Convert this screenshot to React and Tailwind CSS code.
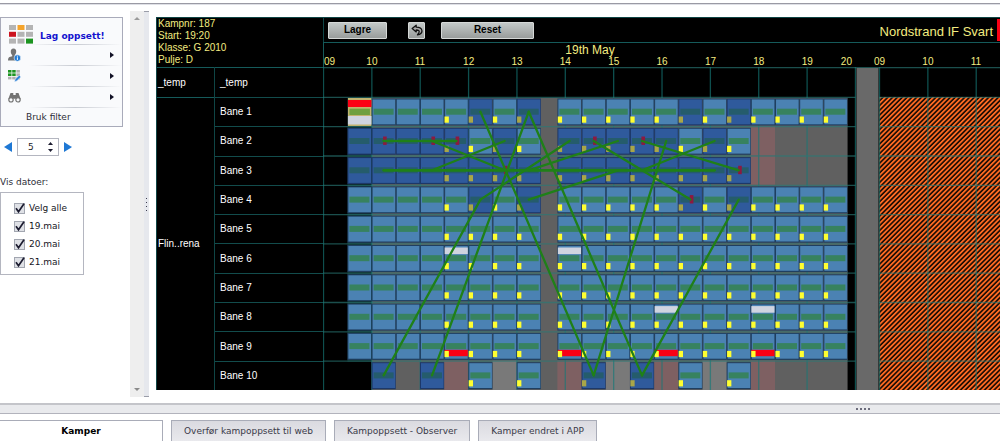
import React from "react";

const HOUR = 48.36;
const SLOT = 24.18;
const MORNING = 48.6;
const AFTERNOON = 234.4;
const TOP = 30;
const ROW = 29.3;
const DAY_END = 532.5;

const am = (i) => MORNING + SLOT * i;
const pm = (j) => AFTERNOON + SLOT * j;
const rowY = (r) => TOP + ROW * (r - 1);
const amC = (i, r) => [am(i) + SLOT / 2, rowY(r) + 14.7];
const pmC = (j, r) => [pm(j) + SLOT / 2, rowY(r) + 14.7];

const range = (a, b) => Array.from({ length: b - a + 1 }, (_, k) => a + k);

const rows = [
  { am: range(0, 6), pm: range(0, 11), darkAm: [4, 6], darkPm: [5, 7] },
  { am: range(-1, 6), pm: range(0, 7), darkAm: [-1, 0, 1, 2, 3, 5], darkPm: [0, 1, 2, 3, 4, 6], pinkPm: [8] },
  { am: range(-1, 6), pm: range(0, 7), darkAm: range(-1, 6), darkPm: range(0, 7), pinkPm: [8] },
  { am: range(-1, 6), pm: range(0, 11), darkAm: [4, 6], darkPm: [5, 7] },
  { am: range(-1, 6), pm: range(0, 11) },
  { am: range(-1, 6), pm: range(0, 11), whiteAm: [3], whitePm: [0] },
  { am: range(-1, 6), pm: range(0, 11) },
  { am: range(-1, 6), pm: range(0, 11), whitePm: [4, 8] },
  { am: range(-1, 6), pm: range(0, 11), redAm: [3], redPm: [0, 4, 8] },
  {
    am: [0, 2, 4, 6], pm: [1, 3, 5, 7], darkAm: [0, 2], darkPm: [1, 3],
    pinkAm: [3], pinkPm: [0, 4, 8], paleAm: [5], palePm: [2, 6],
  },
];

const links = [
  [amC(4, 1), pmC(1, 10)],
  [amC(6, 1), amC(2, 10)],
  [amC(6, 1), pmC(3, 10)],
  [amC(4, 4), amC(0, 10)],
  [amC(2, 2), amC(5, 3)],
  [amC(2, 3), amC(5, 2)],
  [amC(4, 4), pmC(0, 2)],
  [amC(6, 3), pmC(2, 2)],
  [amC(6, 4), pmC(2, 3)],
  [pmC(3, 3), pmC(6, 2)],
  [pmC(1, 2), pmC(5, 4)],
  [pmC(3, 2), pmC(7, 3)],
  [pmC(4, 2), pmC(1, 10)],
  [pmC(7, 4), pmC(3, 10)],
];
const thickLinks = [
  [amC(0, 2), amC(3, 2)],
  [amC(0, 3), pmC(6, 3)],
];
const conflicts = [amC(0, 2), amC(2, 2), amC(3, 2), amC(5, 3), pmC(1, 2), pmC(3, 2), pmC(5, 4), pmC(7, 3)];

function Match({ x, y, dark, flag, white, red }) {
  return (
    <g>
      <rect x={x} y={y + 1.5} width={SLOT} height="27" fill={dark ? "#1d3868" : "#1f3f60"} />
      <rect x={x + 1} y={y + 2.5} width={SLOT - 1.6} height="24.8" fill={dark ? "#2f5a9c" : "#4b82b3"} />
      <rect x={x + 2} y={y + 11.7} width="20" height="6" fill={dark ? "#255c6c" : "#37825f"} />
      {white && <rect x={x + 0.5} y={y + 4} width={SLOT - 1} height="6.6" fill="#d0d4e0" />}
      {red && <rect x={x + 0.5} y={y + 18.4} width={SLOT - 1} height="6.4" fill="#fb0014" />}
      {flag && <rect x={x + 0.4} y={y + 19.5} width="4.3" height="6.2" fill={dark ? "#a9a648" : "#ffff30"} />}
    </g>
  );
}

function HalfDay({ row, r, pos, part, flagFrom }) {
  const has = (kind, i) => (row[kind + part] || []).includes(i);
  return (
    <>
      {row[part.toLowerCase()].map((i) => (
        <Match
          key={i} x={pos(i)} y={rowY(r)} dark={has("dark", i)} flag={i >= flagFrom}
          white={has("white", i)} red={has("red", i)}
        />
      ))}
    </>
  );
}

function Schedule() {
  const bottom = TOP + ROW * 10;
  return (
    <svg className="block h-[323px] w-full" role="img" aria-label="Kampoppsett">
      <defs>
        <pattern id="closed" width="3.4" height="3.4" patternUnits="userSpaceOnUse" patternTransform="rotate(-45)">
          <rect width="3.4" height="3.4" fill="#160a04" />
          <rect width="3.4" height="1.8" fill="#ff6a22" />
        </pattern>
      </defs>
      <rect width="100%" height="323" fill="#000" />
      <rect x={MORNING} y={TOP + 1} width={pm(12) - MORNING} height={bottom - TOP - 1} fill="#606060" />
      <rect x={am(-1)} y={TOP + 1} width={SLOT} height={ROW * 9} fill="#0a2222" />
      {rows.map((row, k) => (
        <g key={k}>
          {[["Am", am], ["Pm", pm]].map(([part, pos]) => (
            <g key={part}>
              {(row["pink" + part] || []).map((i) => (
                <rect key={i} x={pos(i)} y={rowY(k + 1)} width={SLOT} height={ROW} fill="#7e6062" />
              ))}
              {(row["pale" + part] || []).map((i) => (
                <rect key={i} x={pos(i)} y={rowY(k + 1)} width={SLOT} height={ROW} fill="#797979" />
              ))}
            </g>
          ))}
        </g>
      ))}
      <rect x="556.5" y={TOP} width="100%" height={bottom} fill="url(#closed)" />
      <g stroke="#167a78" strokeOpacity="0.65" strokeWidth="1.3">
        {range(0, 11).map((h) => (
          <line key={h} x1={h * HOUR + 0.5} x2={h * HOUR + 0.5} y1="0" y2="323" />
        ))}
        {range(0, 40).map((h) => (
          <line key={h} x1={h * HOUR + 556.5} x2={h * HOUR + 556.5} y1="0" y2="323" />
        ))}
      </g>
      {rows.map((row, k) => (
        <g key={k}>
          <HalfDay row={row} r={k + 1} pos={am} part="Am" flagFrom={3} />
          <HalfDay row={row} r={k + 1} pos={pm} part="Pm" flagFrom={0} />
        </g>
      ))}
      <g>
        <rect x={am(-1) + 0.5} y={TOP + 1} width="23.5" height="28" fill="#c2b26e" />
        <rect x={am(-1) + 0.5} y={TOP + 3} width="23.5" height="7" fill="#fb0014" />
        <rect x={am(-1) + 2} y={TOP + 11.7} width="20.5" height="6.3" fill="#6f9f3f" />
        <rect x={am(-1) + 0.5} y={TOP + 19} width="23.5" height="8.5" fill="#d0d4e0" />
      </g>
      <g stroke="#2a7a76" strokeOpacity="0.65" strokeWidth="1.3">
        <line x1="0" x2="100%" y1="0.5" y2="0.5" />
        {range(1, 10).map((r) => (
          <g key={r}>
            <line x1="0" x2={DAY_END} y1={rowY(r) + 0.4} y2={rowY(r) + 0.4} />
            <line x1="556" x2="100%" y1={rowY(r) + 0.4} y2={rowY(r) + 0.4} />
          </g>
        ))}
      </g>
      <rect x="533.5" y="1" width="22" height="322" fill="#696969" />
      <g fill="#8c1a40">
        {conflicts.map(([x, y]) => (
          <rect key={`${x}-${y}`} x={x - 0.6} y={y - 4.5} width="3.6" height="8.4" />
        ))}
      </g>
      <g stroke="#1f8018" strokeLinecap="round">
        {links.map(([a, b], k) => (
          <line key={k} x1={a[0]} y1={a[1]} x2={b[0]} y2={b[1]} strokeWidth="2.3" />
        ))}
        {thickLinks.map(([a, b], k) => (
          <line key={k} x1={a[0]} y1={a[1]} x2={b[0]} y2={b[1]} strokeWidth="2.7" />
        ))}
      </g>
    </svg>
  );
}

const firstDay = ["09", "10", "11", "12", "13", "14", "15", "16", "17", "18", "19"];
const secondDay = ["09", "10", "11"];
const boardButton =
  "flex h-[17px] items-center justify-center rounded-[1px] border border-[#d5d8d7] bg-linear-to-b from-[#c3c8c7] to-[#999d9c] text-[10px] font-bold text-black";

function HourRow({ hours, alignFirst, end }) {
  return (
    <div className="grid w-[532px] shrink-0 grid-cols-11 text-[10px] leading-[10px]">
      {hours.map((h, i) => (
        <div key={h} className="flex justify-between">
          <span className={i === 0 && alignFirst ? "" : "-ml-[6px]"}>{h}</span>
          {i === 10 && end && <span className="mr-1">{end}</span>}
        </div>
      ))}
    </div>
  );
}

function Board() {
  return (
    <section className="flex min-w-0 flex-1 overflow-hidden border-l border-[#0f4545] bg-black font-['Liberation_Sans',Arial,sans-serif] text-[#f3ec80]">
      <div className="flex w-[166px] shrink-0 flex-col">
        <div className="h-[50px] border-t border-[#0f4545] pl-px text-[10px] leading-[12px]">
          <p>Kampnr: 187</p>
          <p>Start: 19:20</p>
          <p>Klasse: G 2010</p>
          <p>Pulje: D</p>
        </div>
        <div className="flex flex-1 text-[10px] text-white">
          <div className="flex w-[58px] flex-col border-r border-[#0f4545]">
            <div className="flex h-[30px] items-center border-t border-[#155a5a] pl-px">_temp</div>
            <div className="flex flex-1 items-center border-t border-[#155a5a] pl-px">Flin..rena</div>
          </div>
          <div className="flex flex-1 flex-col">
            <div className="flex h-[30px] items-center border-t border-[#155a5a] pl-[5px]">_temp</div>
            <div className="grid flex-1 auto-rows-fr">
              {range(1, 10).map((n) => (
                <div key={n} className="flex items-center border-t border-[#124c4c] pl-[5px]">Bane {n}</div>
              ))}
            </div>
          </div>
        </div>
      </div>
      <div className="min-w-0 flex-1">
        <div className="flex h-[25px] items-center border-l border-t border-[#0f4545] pl-1">
          <button type="button" className={`${boardButton} w-[59px]`}>Lagre</button>
          <button type="button" aria-label="Angre" className={`${boardButton} ml-[21px] w-[17px]`}>
            <svg viewBox="0 0 12 12" className="size-3" fill="none" stroke="#111" strokeWidth="1.3" strokeLinejoin="round">
              <path d="M5.2 1.2 1.2 4.6l4 3.3V6c2.400 0 3.700.7 2.500 3L6.500 10.900C10 10.300 11.200 8.500 10.900 6.500 10.600 4.200 8.600 3.200 5.200 3.200Z" fill="#aaa" />
            </svg>
          </button>
          <button type="button" className={`${boardButton} ml-4 w-[93px]`}>Reset</button>
          <span className="ml-auto pt-1 text-[13px] leading-[18px] whitespace-nowrap">Nordstrand IF Svart</span>
          <span className="ml-1 h-[22px] w-[3px] bg-[#fb0014]" />
        </div>
        <div className="flex h-[25px] flex-col justify-between overflow-hidden border-l border-t border-[#155a5a]">
          <div className="w-[532px] text-center text-[12px] leading-[14px]">19th May</div>
          <div className="flex gap-6">
            <HourRow hours={firstDay} alignFirst end="20" />
            <HourRow hours={secondDay} />
          </div>
        </div>
        <Schedule />
      </div>
    </section>
  );
}

function SetupIcon() {
  const colors = ["#b4b4b4", "#f5a42c", "#b4b4b4", "#cc1420", "#b4b4b4", "#b4b4b4", "#b4b4b4", "#b4b4b4", "#1c9420"];
  return (
    <svg width="25" height="19" viewBox="0 0 25 19" aria-hidden="true">
      {colors.map((c, i) => (
        <rect key={i} x={(i % 3) * 8.5} y={Math.floor(i / 3) * 6.8} width="7" height="5" fill={c} />
      ))}
    </svg>
  );
}

function PersonIcon() {
  return (
    <svg width="13" height="14" viewBox="0 0 13 14" aria-hidden="true">
      <path d="M5.500.5C7.500.5 8.400 2 8.200 4 8 5.600 7.300 6.500 6.800 7v1.200L9 9v3.500H0C0 10.500.5 9.400 1.500 9l2.700-.8V7C3.400 6.300 2.900 5.500 2.800 4 2.600 2 3.500.5 5.500.5Z" fill="#737373" />
      <circle cx="9.400" cy="10" r="3.300" fill="#1f7ad6" stroke="#f9fafc" strokeWidth=".6" />
      <path d="M9.400 9.300v2.600M9.400 7.700v1" stroke="#fff" strokeWidth="1" />
    </svg>
  );
}

function GridEditIcon() {
  return (
    <svg width="13" height="12" viewBox="0 0 13 12" aria-hidden="true">
      {range(0, 8).map((i) => (
        <rect
          key={i} x={(i % 3) * 4.2} y={Math.floor(i / 3) * 3.4} width="3.500" height="2.600"
          fill={i % 3 < 2 && i < 6 ? "#1c9420" : "#b0b0b0"}
        />
      ))}
      <path d="M6.500 11.700 7.200 9.200 11.200 5.300l1.600 1.600-4 4Z" fill="#2b7fd8" stroke="#f9fafc" strokeWidth=".5" />
    </svg>
  );
}

function BinocularsIcon() {
  return (
    <svg width="13" height="11" viewBox="0 0 13 11" aria-hidden="true">
      <path d="M2.500 1h2.800v2h2.400V1h2.800l2.200 6-3.200-1-1.700.8h-2.600L3.500 6 .3 7Z" fill="#737373" />
      <circle cx="3" cy="7.800" r="2.200" fill="#f9fafc" stroke="#737373" strokeWidth="1.200" />
      <circle cx="10" cy="7.800" r="2.200" fill="#f9fafc" stroke="#737373" strokeWidth="1.200" />
    </svg>
  );
}

function Divider() {
  return <div className="ml-7 h-px bg-linear-to-r from-[#f9fafc] via-[#c8cbd2] to-[#f9fafc]" />;
}

function MenuRow({ label, icon }) {
  return (
    <>
      <button type="button" aria-label={label} className="flex h-5 w-full items-center justify-between pr-2 pl-[7px]">
        {icon}
        <svg width="4" height="6" viewBox="0 0 4 6" aria-hidden="true"><path d="M0 0 4 3 0 6Z" fill="#111126" /></svg>
      </button>
      <Divider />
    </>
  );
}

function DateCheck({ label }) {
  return (
    <label className="flex h-[18px] items-center gap-1">
      <span className="grid">
        <input
          type="checkbox" defaultChecked
          className="peer [grid-area:1/1] size-[11px] appearance-none border border-[#a2a6b0] bg-[#dfe1e6]"
        />
        <svg viewBox="0 0 11 11" className="pointer-events-none invisible size-[11px] [grid-area:1/1] peer-checked:visible" fill="none" stroke="#1c1c30" strokeWidth="1.700">
          <path d="M2 5.200 4.500 8.800 10 .8" />
        </svg>
      </span>
      {label}
    </label>
  );
}

function Sidebar() {
  return (
    <aside className="w-[130px] shrink-0 pt-[6px] text-[#2d2d38]">
      <div className="w-[123px] border border-[#a9abba] bg-[#f9fafc]">
        <button type="button" className="flex h-[26px] w-full items-end gap-[6px] pl-2 font-bold text-[#1313cf]">
          <SetupIcon />
          <span className="pb-px">Lag oppsett!</span>
        </button>
        <Divider />
        <MenuRow label="Deltakere" icon={<PersonIcon />} />
        <MenuRow label="Rediger oppsett" icon={<GridEditIcon />} />
        <MenuRow label="Søk" icon={<BinocularsIcon />} />
        <button type="button" className="block h-[18px] w-full pl-[25px] text-left">Bruk filter</button>
      </div>
      <div className="mt-[11px] flex h-[18px] items-center gap-[5px] pl-1">
        <button type="button" aria-label="Forrige">
          <svg width="8" height="10" viewBox="0 0 8 10"><path d="M8 0v10L0 5Z" fill="#1f78d4" /></svg>
        </button>
        <div className="flex h-[18px] w-[42px] items-center border border-[#b4b6c0] bg-white">
          <input
            type="number" aria-label="Antall" defaultValue="5"
            className="w-[30px] [appearance:textfield] pl-[10px] text-[#1d1d28] outline-none [&::-webkit-inner-spin-button]:appearance-none"
          />
          <div className="flex flex-col gap-1">
            <button type="button" aria-label="Øk">
              <svg className="block" width="5" height="3" viewBox="0 0 5 3"><path d="M0 3h5L2.500 0Z" fill="#1c1c30" /></svg>
            </button>
            <button type="button" aria-label="Reduser">
              <svg className="block" width="5" height="3" viewBox="0 0 5 3"><path d="M0 0h5L2.500 3Z" fill="#1c1c30" /></svg>
            </button>
          </div>
        </div>
        <button type="button" aria-label="Neste">
          <svg width="8" height="10" viewBox="0 0 8 10"><path d="M0 0v10l8-5Z" fill="#1f78d4" /></svg>
        </button>
      </div>
      <fieldset>
        <legend className="pt-[19px] pb-[3px] leading-[14px]">Vis datoer:</legend>
        <div className="w-[84px] border border-[#b4b6c0] pt-[6px] pb-[3px] pl-[13px] text-[#16161e]">
          {["Velg alle", "19.mai", "20.mai", "21.mai"].map((d) => <DateCheck key={d} label={d} />)}
        </div>
      </fieldset>
    </aside>
  );
}

const tab = "h-[21px] border border-b-0 border-[#a9acb8] px-3";

export default function App() {
  return (
    <div className="bg-white font-['DejaVu_Sans',Verdana,sans-serif] text-[9px] leading-[14px]">
      <div className="mt-[3px] h-[2px] border-t border-[#9a9aa4] bg-[#dfe0e6]" />
      <main className="flex pt-[6px] pb-[6px]">
        <Sidebar />
        <div className="flex w-[14px] shrink-0 flex-col items-center justify-between bg-[#eeeeee] py-[6px]">
          <svg width="6" height="3" viewBox="0 0 6 3"><path d="M0 3h6L3 0Z" fill="#9a9a9a" /></svg>
          <svg width="6" height="3" viewBox="0 0 6 3"><path d="M0 0h6L3 3Z" fill="#8a8a8a" /></svg>
        </div>
        <div className="flex w-[5px] shrink-0 flex-col items-center justify-center gap-[3px] border-y border-[#9a9da8] bg-[#e6e8ed]">
          {range(1, 4).map((n) => <span key={n} className="size-px bg-[#3c3c50]" />)}
        </div>
        <div className="flex min-w-0 flex-1 pt-[6px] pb-[7px] pl-[7px]">
          <Board />
        </div>
      </main>
      <div className="flex h-[11px] items-center justify-center gap-[2px] border-t-2 border-b border-[#c4c5ca] border-b-[#b2b3bc] bg-[#e9eaed] pl-[725px]">
        {range(1, 4).map((n) => <span key={n} className="size-[2px] bg-[#6c6c7c]" />)}
      </div>
      <nav className="flex gap-2 pt-[6px] pb-[2px] text-[#3a3a48]">
        <button type="button" className={`${tab} w-[163px] border-l-0 bg-white font-bold text-black`}>Kamper</button>
        <button type="button" className={`${tab} bg-linear-to-b from-[#dadae0] to-[#e9e9ed]`}>Overfør kampoppsett til web</button>
        <button type="button" className={`${tab} bg-linear-to-b from-[#dadae0] to-[#e9e9ed]`}>Kampoppsett - Observer</button>
        <button type="button" className={`${tab} bg-linear-to-b from-[#dadae0] to-[#e9e9ed]`}>Kamper endret i APP</button>
      </nav>
    </div>
  );
}
